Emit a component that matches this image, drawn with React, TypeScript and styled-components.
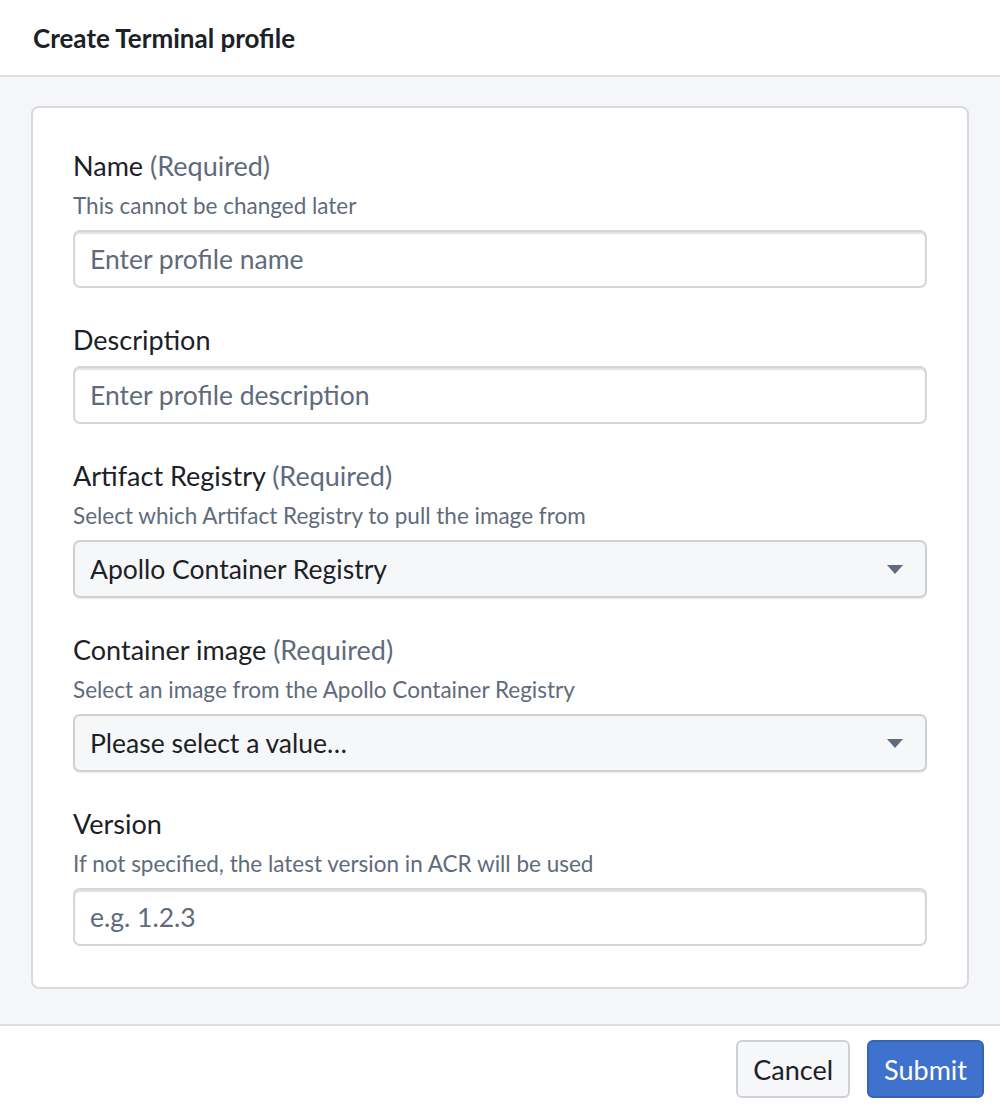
import React from "react";
import styled, { createGlobalStyle } from "styled-components";

const Global = createGlobalStyle`
  body { margin: 0; font-family: Lato, "Liberation Sans", sans-serif; background: #fff; color: #1c2127; }
  * { box-sizing: border-box; }
`;

const Dialog = styled.div`
  width: 1000px; height: 1116px; display: flex; flex-direction: column; background: #fff;
`;
const Header = styled.div`
  height: 77px; flex: none; display: flex; align-items: center; padding: 0 33px;
  border-bottom: 2px solid #dcdee2; font-size: 26px; font-weight: 700; color: #1c2127;
`;
const Body = styled.div`
  flex: 1; background: #f5f6f8; padding: 29px 31px 30px;
`;
const Card = styled.div`
  background: #fff; border: 2px solid #d8dadf; border-radius: 8px; padding: 42px 40px 41px;
  display: flex; flex-direction: column; gap: 36px;
`;
const Field = styled.div` display: flex; flex-direction: column; `;
const Label = styled.div`
  font-size: 27px; line-height: 32px; color: #1c2127; margin-bottom: 10px;
  span { color: #5f6b7c; }
`;
const Helper = styled.div`
  font-size: 22.5px; line-height: 27px; color: #5f6b7c; margin: 0 0 11px;
`;
const Input = styled.input`
  height: 58px; width: 100%; border: 2px solid #d3d6db; border-radius: 7px; padding: 0 15px;
  font-family: inherit; font-size: 26.5px; color: #1c2127; outline: none;
  box-shadow: inset 0 2px 1px rgba(0,0,0,0.12);
  &::placeholder { color: #5f6b7c; }
`;
const Select = styled.div`
  height: 58px; display: flex; align-items: center; justify-content: space-between;
  border: 2px solid #cdd0d5; border-radius: 7px; padding: 0 22px 0 15px; background: #f6f7f9;
  font-size: 26.5px; color: #1c2127; box-shadow: 0 1px 1px rgba(0,0,0,0.08);
`;
const Caret = styled.div`
  width: 0; height: 0; border-left: 8px solid transparent; border-right: 8px solid transparent;
  border-top: 9px solid #5f6b7c;
`;
const Footer = styled.div`
  height: 92px; flex: none; border-top: 2px solid #dcdee2; display: flex; justify-content: flex-end;
  align-items: center; gap: 17px; padding: 0 16px 4px;
`;
const Button = styled.button<{ $primary?: boolean }>`
  height: 58px; padding: 0 15px; border-radius: 6px; font-family: inherit; font-size: 27px;
  background: ${p => (p.$primary ? "#3f72cc" : "#f6f7f9")};
  color: ${p => (p.$primary ? "#fff" : "#1c2127")};
  border: 2px solid ${p => (p.$primary ? "#3563b5" : "#cdd0d5")};
`;

export default function App() {
  return (
    <Dialog>
      <Global />
      <Header>Create Terminal profile</Header>
      <Body>
        <Card>
          <Field>
            <Label>Name <span>(Required)</span></Label>
            <Helper>This cannot be changed later</Helper>
            <Input placeholder="Enter profile name" />
          </Field>
          <Field>
            <Label>Description</Label>
            <Input placeholder="Enter profile description" />
          </Field>
          <Field>
            <Label>Artifact Registry <span>(Required)</span></Label>
            <Helper>Select which Artifact Registry to pull the image from</Helper>
            <Select>Apollo Container Registry<Caret /></Select>
          </Field>
          <Field>
            <Label>Container image <span>(Required)</span></Label>
            <Helper>Select an image from the Apollo Container Registry</Helper>
            <Select>Please select a value…<Caret /></Select>
          </Field>
          <Field>
            <Label>Version</Label>
            <Helper>If not specified, the latest version in ACR will be used</Helper>
            <Input placeholder="e.g. 1.2.3" />
          </Field>
        </Card>
      </Body>
      <Footer>
        <Button>Cancel</Button>
        <Button $primary>Submit</Button>
      </Footer>
    </Dialog>
  );
}
